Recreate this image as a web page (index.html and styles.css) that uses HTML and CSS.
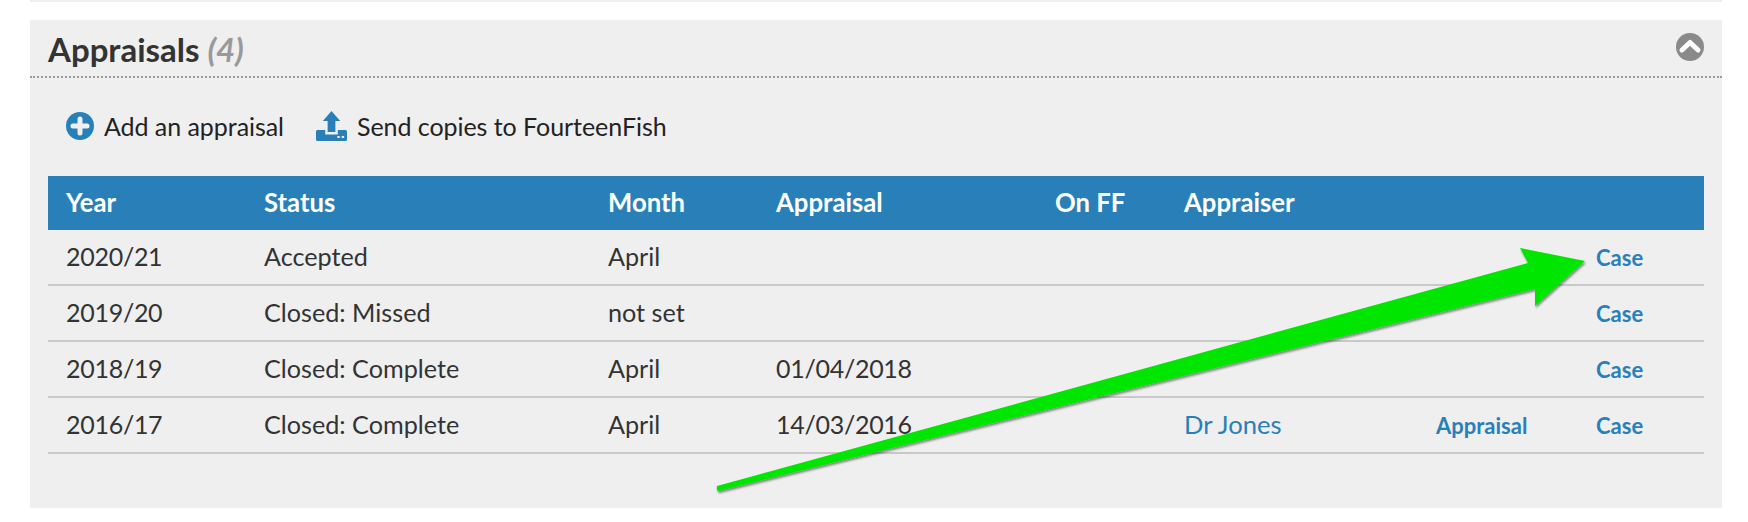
FILE: index.html
```html
<!DOCTYPE html>
<html lang="en">
<head>
<meta charset="utf-8">
<title>Appraisals</title>
<link rel="stylesheet" href="styles.css">
</head>
<body>
<div class="top-strip"></div>
<section class="panel">
  <header class="panel-head">
    <h2 class="panel-title">Appraisals <em class="count">(4)</em></h2>
    <svg class="collapse" viewBox="0 0 28 28" aria-hidden="true">
      <circle cx="14" cy="14" r="14" fill="#8a8a8a"/>
      <path d="M6 17 14 9.500l8 7.500" fill="none" stroke="#fff" stroke-width="5" stroke-linecap="round" stroke-linejoin="round"/>
    </svg>
  </header>
  <div class="actions">
    <a class="action">
      <svg class="icon-add" viewBox="0 0 28 28" aria-hidden="true">
        <circle cx="14" cy="14" r="14" fill="#2980b9"/>
        <path d="M14 7v14M7 14h14" stroke="#efefef" stroke-width="5" stroke-linecap="round"/>
      </svg>
      Add an appraisal
    </a>
    <a class="action">
      <svg class="icon-upload" viewBox="0 0 32 30" preserveAspectRatio="none" aria-hidden="true">
        <path d="M16 0 25 10H20V21H12V10H7Z" fill="#2980b9"/>
        <path d="M1.500 19H9.500V23.500H22.500V19H30.500A1.500 1.500 0 0 1 32 20.500V28.500A1.500 1.500 0 0 1 30.500 30H1.500A1.500 1.500 0 0 1 0 28.500V20.500A1.500 1.500 0 0 1 1.500 19Z" fill="#2980b9"/>
        <path d="M22 25h2.500v2H22ZM26.500 25H29v2h-2.500Z" fill="#efefef"/>
      </svg>
      Send copies to FourteenFish
    </a>
  </div>
  <table class="grid">
    <colgroup>
      <col class="c-year"><col class="c-status"><col class="c-month"><col class="c-date"><col class="c-ff"><col class="c-who"><col class="c-app"><col class="c-case">
    </colgroup>
    <thead>
      <tr><th>Year</th><th>Status</th><th>Month</th><th>Appraisal</th><th>On FF</th><th>Appraiser</th><th></th><th></th></tr>
    </thead>
    <tbody>
      <tr><td class="num">2020/21</td><td>Accepted</td><td>April</td><td></td><td></td><td></td><td></td><td><a class="small-link">Case</a></td></tr>
      <tr><td class="num">2019/20</td><td>Closed: Missed</td><td>not set</td><td></td><td></td><td></td><td></td><td><a class="small-link">Case</a></td></tr>
      <tr><td class="num">2018/19</td><td>Closed: Complete</td><td>April</td><td class="num">01/04/2018</td><td></td><td></td><td></td><td><a class="small-link">Case</a></td></tr>
      <tr><td class="num">2016/17</td><td>Closed: Complete</td><td>April</td><td class="num">14/03/2016</td><td></td><td><a class="link">Dr Jones</a></td><td><a class="small-link">Appraisal</a></td><td><a class="small-link">Case</a></td></tr>
    </tbody>
  </table>
  <svg class="annotation" viewBox="0 0 1748 522" aria-hidden="true">
    <defs>
      <filter id="arrow-shadow" x="-5%" y="-5%" width="110%" height="110%">
        <feDropShadow dx="1" dy="2" stdDeviation="1.200" flood-color="#000" flood-opacity="0.450"/>
      </filter>
    </defs>
    <path d="M1585 261 1520 248 1528 263 717 486Q716 491 719 491L1535 289 1535 306Z" fill="#00e600" filter="url(#arrow-shadow)"/>
  </svg>
</section>
</body>
</html>
```
FILE: styles.css
```css
* { box-sizing: border-box; }
html, body { margin: 0; padding: 0; background: #fff; }
body {
  width: 1748px;
  height: 522px;
  overflow: hidden;
  padding: 0 26px 0 30px;
  font-family: Lato, "Open Sans", sans-serif;
  color: #333;
}
.top-strip { height: 2px; background: #efefef; }
.panel {
  margin-top: 18px;
  height: 488px;
  background: #efefef;
  padding: 0 18px;
}
.panel-head {
  display: flex;
  align-items: center;
  justify-content: space-between;
  height: 58px;
  margin: 0 -18px;
  padding: 0 18px;
  border-bottom: 2px dotted #999;
}
.panel-title { margin: 0; padding-top: 2px; font-size: 33px; font-weight: 700; color: #333; line-height: 1; }
.count { font-weight: 700; color: #999; letter-spacing: -0.3px; }
.collapse { width: 28px; height: 28px; margin-top: -2px; flex: none; }
.actions {
  display: flex;
  align-items: center;
  gap: 32px;
  height: 96px;
  padding: 0 0 0 18px;
  margin-bottom: 2px;
  font-size: 25px;
  letter-spacing: -0.05px;
  color: #222;
}
.action { display: flex; align-items: center; gap: 10px; }
.icon-add { width: 28px; height: 28px; flex: none; }
.icon-upload { width: 31px; height: 30px; flex: none; }
.grid {
  width: 1656px;
  border-collapse: collapse;
  table-layout: fixed;
  font-size: 25.200px;
}
.c-year { width: 198px; }
.c-status { width: 344px; }
.c-month { width: 168px; }
.c-date { width: 279px; }
.c-ff { width: 129px; }
.c-who { width: 252px; }
.c-app { width: 160px; }
.c-case { width: 126px; }
.grid th {
  height: 54px;
  padding: 0 0 2px 18px;
  background: #2980b9;
  color: #fff;
  font-size: 25.700px;
  font-weight: 700;
  text-align: left;
}
.grid td {
  height: 56px;
  padding: 0 0 2px 18px;
  border-bottom: 2px solid #c8c8c8;
  white-space: nowrap;
}
.grid tbody tr:first-child td { height: 55px; }
.grid .num { font-size: 25px; letter-spacing: -0.28px; }
.link { color: #2980b9; font-size: 25.600px; }
.small-link { color: #2980b9; font-size: 22px; font-weight: 700; }
.annotation {
  position: absolute;
  left: 0;
  top: 0;
  width: 1748px;
  height: 522px;
  pointer-events: none;
}
```
